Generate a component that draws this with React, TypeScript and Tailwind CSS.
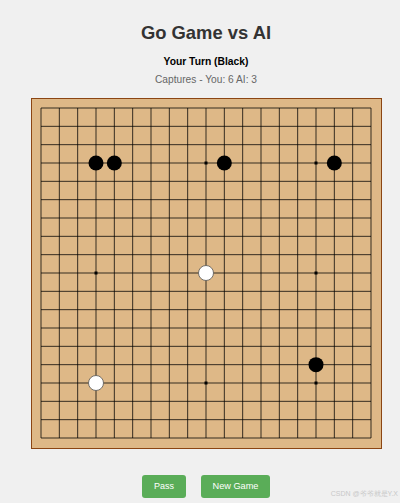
import React from "react";

const SIZE = 19;
const PAD = 10;
const CELL = 330 / 18;
const STARS = [3, 9, 15];

type Stone = { x: number; y: number; c: "b" | "w" };

const stones: Stone[] = [
  { x: 3, y: 3, c: "b" },
  { x: 4, y: 3, c: "b" },
  { x: 10, y: 3, c: "b" },
  { x: 16, y: 3, c: "b" },
  { x: 9, y: 9, c: "w" },
  { x: 15, y: 14, c: "b" },
  { x: 3, y: 15, c: "w" },
];

const pos = (i: number) => PAD + i * CELL;

function Board() {
  const lines = Array.from({ length: SIZE }, (_, i) => i);
  return (
    <div className="mt-[12px] w-[351px] h-[351px] border-[1.5px] border-[#8b4513] bg-[#deb887]">
      <svg width="348" height="348" viewBox="-0.5 -0.5 348 348" className="block">
        {lines.map((i) => (
          <g key={i} stroke="#000" strokeWidth="0.9" strokeOpacity="0.85">
            <line x1={pos(0) - 1.5} y1={pos(i) - 1.5} x2={pos(18) - 1.5} y2={pos(i) - 1.5} />
            <line x1={pos(i) - 1.5} y1={pos(0) - 1.5} x2={pos(i) - 1.5} y2={pos(18) - 1.5} />
          </g>
        ))}
        {STARS.flatMap((sx) =>
          STARS.map((sy) => (
            <rect key={`${sx}-${sy}`} x={pos(sx) - 3} y={pos(sy) - 3} width="3" height="3" fill="#000" />
          ))
        )}
        {stones.map((s) => (
          <circle
            key={`${s.x}-${s.y}`}
            cx={pos(s.x) - 1.5}
            cy={pos(s.y) - 1.5}
            r="7.5"
            fill={s.c === "b" ? "#000" : "#fff"}
            stroke={s.c === "b" ? "none" : "#555"}
            strokeWidth="0.8"
          />
        ))}
      </svg>
    </div>
  );
}

export default function App() {
  return (
    <div
      className="relative min-h-screen bg-[#f0f0f0] pl-[12px] flex flex-col items-center"
      style={{ fontFamily: '"Liberation Sans", Arial, sans-serif' }}
    >
      <h1 className="mt-[22px] h-[22px] leading-[22px] text-[18.4px] font-bold text-[#333]">Go Game vs AI</h1>
      <p className="mt-[12px] h-[12px] leading-[12px] text-[10.3px] font-bold text-black">Your Turn (Black)</p>
      <p className="mt-[6px] h-[12px] leading-[12px] text-[10.2px] text-[#666]">Captures - You: 6 AI: 3</p>

      <Board />

      <div className="mt-[26px] flex gap-[15px]">
        <button className="h-[23px] w-[44px] rounded-[3px] bg-[#5aad58] text-[9px] text-white">Pass</button>
        <button className="h-[23px] w-[69px] rounded-[3px] bg-[#5aad58] text-[9.2px] text-white">New Game</button>
      </div>

      <span className="absolute right-[2px] bottom-[4px] text-[7px] text-[#c8c8c8]">CSDN @爷爷就是Y.X</span>
    </div>
  );
}
